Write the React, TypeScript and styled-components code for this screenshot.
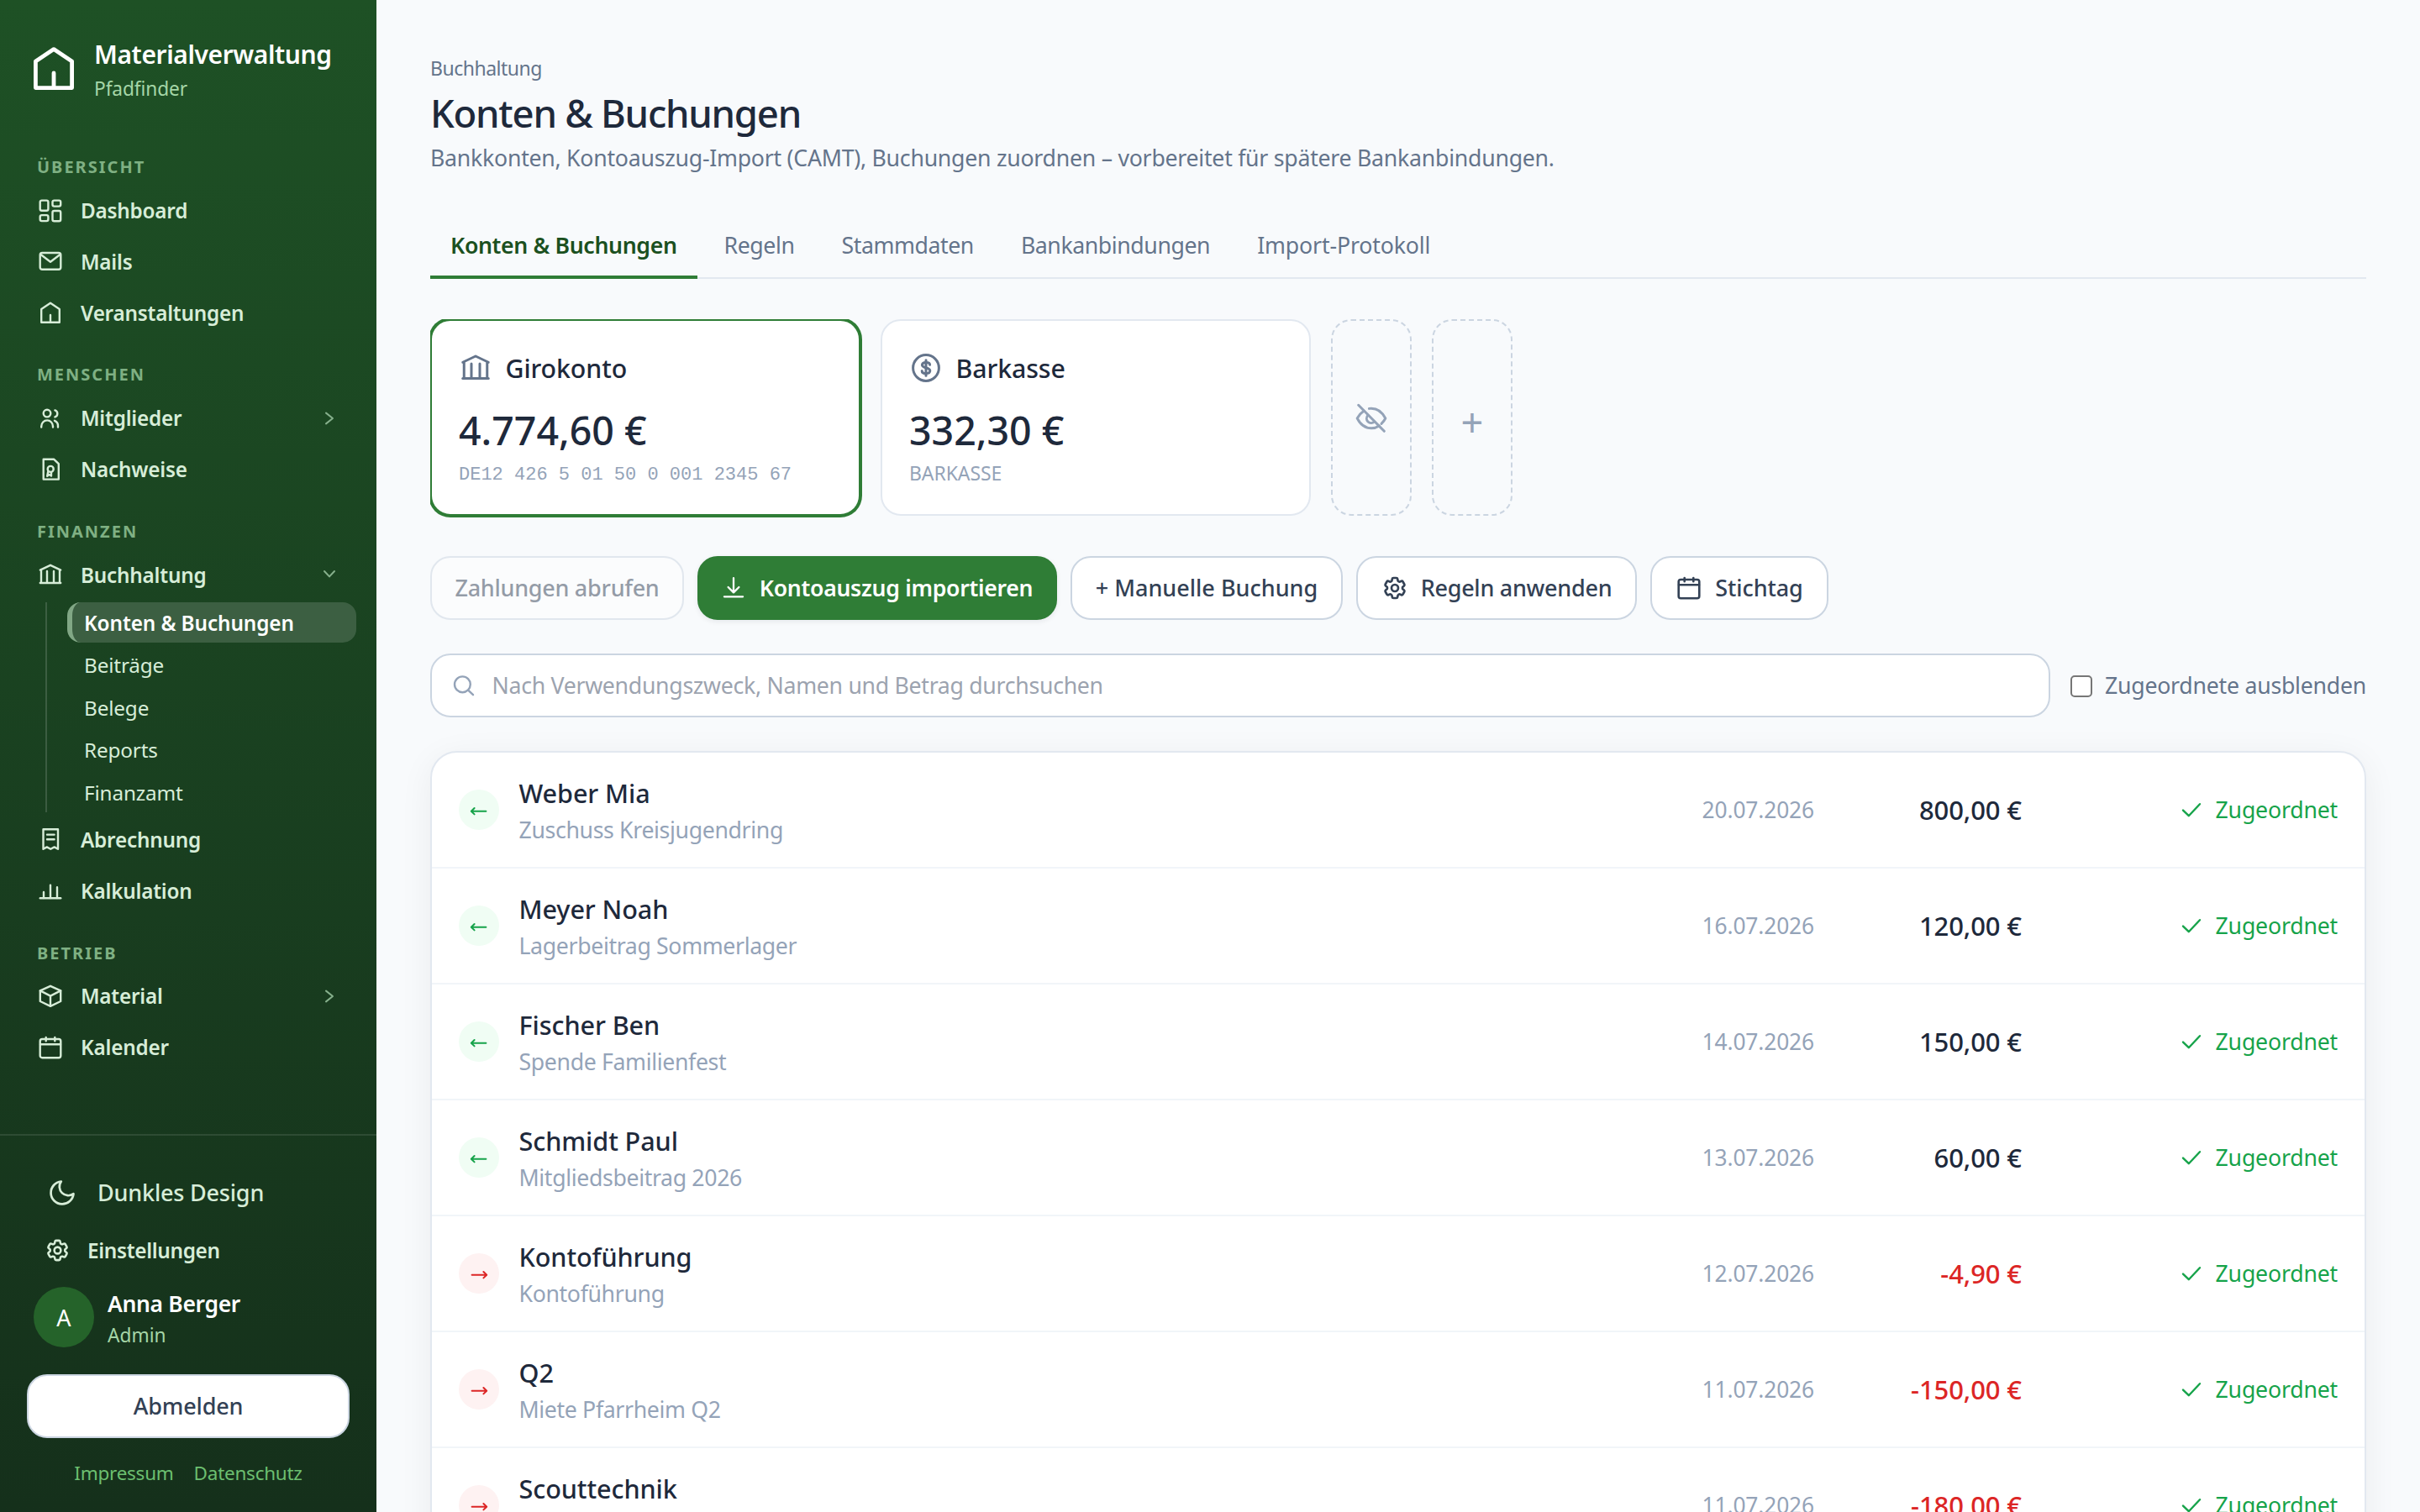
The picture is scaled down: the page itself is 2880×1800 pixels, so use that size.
import React from "react";
import styled, { createGlobalStyle, css } from "styled-components";
import { HiOutlineCog6Tooth } from "react-icons/hi2";

const GlobalStyle = createGlobalStyle`
  *, *::before, *::after {
    box-sizing: border-box;
  }

  body {
    margin: 0;
    height: 1800px;
    overflow: hidden;
    background: #f8fafc;
    color: #1e293b;
    font-family: "Noto Sans", "Open Sans", sans-serif;
  }

  button, input {
    font-family: inherit;
  }
`;

const Page = styled.div`
  display: flex;
  height: 1800px;
  overflow: hidden;
`;

/* ---------- icons ---------- */

const Svg = styled.svg<{ $size?: number; $stroke?: number }>`
  width: ${({ $size }) => $size || 32}px;
  height: ${({ $size }) => $size || 32}px;
  flex: none;
  fill: none;
  stroke: currentColor;
  stroke-width: ${({ $stroke }) => $stroke || 2.4};
  stroke-linecap: round;
  stroke-linejoin: round;
`;

const GearIcon = styled(HiOutlineCog6Tooth)<{ $size: number }>`
  width: ${({ $size }) => $size}px;
  height: ${({ $size }) => $size}px;
  flex: none;
  stroke-width: 2;
`;

type IconName =
  | "dashboard"
  | "mail"
  | "house"
  | "users"
  | "proof"
  | "bank"
  | "receipt"
  | "chart"
  | "box"
  | "calendar";

const icons: Record<IconName, React.ReactNode> = {
  dashboard: (
    <>
      <rect x="3.7" y="3.6" width="9.7" height="12.2" rx="2" />
      <rect x="18.5" y="3.6" width="9.7" height="7" rx="2" />
      <rect x="3.7" y="21.1" width="9.7" height="7" rx="2" />
      <rect x="18.5" y="16" width="9.7" height="12.2" rx="2" />
    </>
  ),
  mail: (
    <>
      <rect x="3.7" y="6" width="24.6" height="19.8" rx="2.5" />
      <path d="M4.5 8 16 16.8 27.5 8" />
    </>
  ),
  house: (
    <>
      <path d="M5.2 12 16 4.8 26.8 12V27.8H5.2Z" />
      <path d="M16 19V27.5" />
    </>
  ),
  users: (
    <>
      <circle cx="12" cy="10.1" r="4.3" />
      <path d="M5.2 26.5V25.6a6.9 7.2 0 0 1 13.8 0V26.5" />
      <path d="M21.4 6.4a4.2 4.2 0 0 1 0 8" />
      <path d="M21 18.8a6.6 6.6 0 0 1 4 6.4V26.5" />
    </>
  ),
  proof: (
    <>
      <path d="M7.7 3.8H20.3L25.8 9.2V27.6H7.7Z" />
      <circle cx="16.2" cy="15.4" r="3.5" />
      <path d="M13.4 17.6 12.2 23.8 14.6 22 17 23.6V19" />
    </>
  ),
  bank: (
    <>
      <path d="M3.8 10.6 16 4.8 28.2 10.6" />
      <path d="M5 11V25M12 12V25M20 12V25M27 11V25" />
      <path d="M3.8 26H28.2" />
    </>
  ),
  receipt: (
    <>
      <path d="M7.5 3.2H25V26.8L20.7 24.4 16.2 26.8 11.8 24.4 7.5 26.8Z" />
      <path d="M12 9.6H20.6M12 15.2H20.6" />
    </>
  ),
  chart: (
    <>
      <path d="M3.8 25.2H28.2" />
      <path d="M8 18V25M16 9.6V25M24 12.2V25" />
    </>
  ),
  box: (
    <>
      <path d="M16 3.8 28.2 9.4V22L16 27.8 3.8 22V9.4Z" />
      <path d="M3.8 9.4 16 15.6 28.2 9.4M16 15.6V27.6" />
    </>
  ),
  calendar: (
    <>
      <rect x="3.7" y="6" width="24.6" height="22.2" rx="2.5" />
      <path d="M4 12.2H28M10.7 4V8.2M21.3 4V8.2" />
    </>
  ),
};

const Icon = ({
  name,
  size,
  stroke,
}: {
  name: IconName;
  size?: number;
  stroke?: number;
}) => (
  <Svg viewBox="0 0 32 32" $size={size} $stroke={stroke}>
    {icons[name]}
  </Svg>
);

/* ---------- sidebar ---------- */

const Sidebar = styled.aside`
  width: 448px;
  height: 1800px;
  flex: none;
  display: flex;
  flex-direction: column;
  background: linear-gradient(180deg, #1e5125 0%, #15301b 100%);
  color: #d7edd8;
`;

const Brand = styled.div`
  display: flex;
  align-items: center;
  gap: 16px;
  height: 185.3px;
  padding: 0 24px 23px 32px;
  color: #fff;
`;

const BrandText = styled.div`
  padding-top: 6px;
`;

const BrandName = styled.div`
  font-size: 30px;
  line-height: 44px;
  font-weight: 600;
  letter-spacing: -0.4px;
`;

const BrandSub = styled.div`
  font-size: 22.7px;
  line-height: 38px;
  letter-spacing: -0.1px;
  color: #a5d6a7;
`;

const Nav = styled.nav`
  flex: 1;
  display: flex;
  flex-direction: column;
  gap: 29.8px;
`;

const NavSection = styled.div`
  display: flex;
  flex-direction: column;
`;

const NavLabel = styled.div`
  padding-left: 44px;
  margin-bottom: 7px;
  font-size: 20px;
  line-height: 28px;
  font-weight: 700;
  letter-spacing: 2px;
  color: #7fb083;
`;

const NavItem = styled.a`
  display: flex;
  align-items: center;
  height: 60.8px;
  padding: 0 44px;
  gap: 20px;
  font-size: 24.3px;
  font-weight: 600;
  letter-spacing: -0.22px;
`;

const Chevron = styled(Svg)`
  margin-left: auto;
  color: #86b08c;
`;

const SubNav = styled.div`
  display: flex;
  flex-direction: column;
  gap: 2.5px;
  margin: 2.5px 24px 2px 54px;
  padding-left: 24px;
  border-left: 2px solid rgba(255, 255, 255, 0.15);
`;

const SubItem = styled.a<{ $active?: boolean }>`
  display: flex;
  align-items: center;
  height: 48px;
  padding-left: 14px;
  border-left: 6px solid transparent;
  border-radius: 16px;
  font-size: 24.3px;
  letter-spacing: -0.15px;
  ${({ $active }) =>
    $active &&
    css`
      border-left-color: #81a785;
      background: rgba(255, 255, 255, 0.15);
      color: #fff;
      font-weight: 600;
      letter-spacing: -0.1px;
    `}
`;

const SidebarFooter = styled.div`
  height: 450px;
  padding: 32px 32px 0;
  border-top: 2px solid rgba(255, 255, 255, 0.1);
`;

const ThemeToggle = styled.div`
  display: flex;
  align-items: center;
  height: 71px;
  padding-left: 24px;
  gap: 24px;
  font-size: 27px;
  font-weight: 500;
  letter-spacing: -0.2px;
`;

const SettingsLink = styled.a`
  display: flex;
  align-items: center;
  height: 66px;
  padding-left: 21px;
  gap: 20px;
  font-size: 24.4px;
  font-weight: 600;
  letter-spacing: -0.35px;
`;

const UserRow = styled.div`
  display: flex;
  gap: 16px;
  height: 72px;
  margin-top: 11px;
  padding-left: 8px;
`;

const Avatar = styled.div`
  width: 72px;
  height: 72px;
  border-radius: 50%;
  display: flex;
  align-items: center;
  justify-content: center;
  background: #25632a;
  color: #fff;
  font-size: 27px;
`;

const UserName = styled.div`
  padding-top: 1px;
  font-size: 26.5px;
  line-height: 39px;
  font-weight: 600;
  letter-spacing: -0.35px;
  color: #fff;
`;

const UserRole = styled.div`
  font-size: 22.7px;
  line-height: 35px;
  color: #a5d6a7;
`;

const LogoutButton = styled.button`
  display: block;
  width: 100%;
  height: 76px;
  margin-top: 32px;
  padding: 0 0 1px;
  border: 2px solid #cbd5e1;
  border-radius: 24px;
  background: #fff;
  color: #334155;
  font-size: 27px;
  font-weight: 500;
  letter-spacing: -0.15px;
`;

const LegalLinks = styled.div`
  display: flex;
  justify-content: center;
  gap: 24px;
  margin-top: 25.5px;
  font-size: 22.5px;
  line-height: 32px;
  letter-spacing: -0.25px;
  color: #6cbf70;
`;

/* ---------- main ---------- */

const Main = styled.main`
  flex: 1;
  min-width: 0;
  padding: 65px 64px 0;
`;

const Breadcrumb = styled.div`
  font-size: 23px;
  line-height: 32px;
  letter-spacing: -0.5px;
  color: #64748b;
`;

const Title = styled.h1`
  margin: 9px 0 6px;
  font-size: 45.5px;
  line-height: 56px;
  font-weight: 500;
  letter-spacing: -1.25px;
`;

const Intro = styled.p`
  margin: 0;
  font-size: 26.7px;
  line-height: 40px;
  letter-spacing: -0.26px;
  color: #64748b;
`;

const Tabs = styled.div`
  display: flex;
  gap: 8px;
  height: 81px;
  margin-top: 43px;
  box-shadow: inset 0 -2px #e2e8f0;
`;

const Tab = styled.a<{ $active?: boolean }>`
  display: flex;
  align-items: center;
  padding: 3px 24px 0;
  border-bottom: 4px solid transparent;
  font-size: 26.7px;
  letter-spacing: -0.43px;
  color: #64748b;

  &:last-child {
    letter-spacing: -0.15px;
  }

  ${({ $active }) =>
    $active &&
    css`
      border-bottom-color: #2f7d36;
      color: #1b5020;
      font-weight: 600;
      letter-spacing: -0.38px;
    `}
`;

const Accounts = styled.div`
  display: flex;
  gap: 24px;
  height: 242px;
  margin-top: 48px;
  overflow: hidden;
`;

const AccountCard = styled.div<{ $selected?: boolean }>`
  width: 512px;
  height: 234px;
  padding: 34px 30px 0 32px;
  border: 2px solid #e2e8f0;
  border-radius: 24px;
  background: #fff;
  ${({ $selected }) =>
    $selected &&
    css`
      border-color: #2f7d36;
      box-shadow: 0 0 0 2px #2f7d36;
    `}
`;

const AccountHead = styled.div`
  display: flex;
  align-items: center;
  gap: 13.5px;
  height: 44px;
  margin-left: -2px;
  font-size: 30.3px;
  font-weight: 500;
  letter-spacing: -0.1px;
`;

const AccountIcon = styled.span`
  width: 44px;
  height: 44px;
  display: flex;
  align-items: center;
  justify-content: center;
  color: #64748b;
`;

const Balance = styled.div`
  margin: 22px 0 8px;
  font-size: 46.5px;
  line-height: 60px;
  font-weight: 500;
`;

const AccountMeta = styled.div<{ $mono?: boolean }>`
  font-size: 23px;
  line-height: 26px;
  letter-spacing: -0.1px;
  color: #94a3b8;
  ${({ $mono }) =>
    $mono &&
    css`
      font-family: "Liberation Mono", monospace;
      font-size: 22px;
      line-height: 32px;
      letter-spacing: 0;
    `}
`;

const GhostCard = styled.button<{ $text?: boolean }>`
  width: 96px;
  height: 234px;
  display: flex;
  align-items: center;
  justify-content: center;
  padding: ${({ $text }) => ($text ? "10px 0 0" : "2px 0 0")};
  border: 2px dashed #cbd5e1;
  border-radius: 24px;
  background: transparent;
  color: #94a3b8;
  font-size: 47px;
  line-height: 60px;
`;

const Toolbar = styled.div`
  display: flex;
  gap: 16px;
  margin-top: 40px;
`;

const ToolButton = styled.button<{
  $width: number;
  $primary?: boolean;
  $tracking?: number;
}>`
  display: flex;
  align-items: center;
  justify-content: center;
  gap: 15px;
  width: ${({ $width }) => $width}px;
  height: 76px;
  padding: 0 0 1px;
  border: 2px solid #cbd5e1;
  border-radius: 24px;
  background: #fff;
  color: #334155;
  font-size: 27px;
  font-weight: 500;
  letter-spacing: ${({ $tracking }) => $tracking ?? -0.28}px;
  white-space: nowrap;

  &:disabled {
    opacity: 0.5;
  }

  ${({ $primary }) =>
    $primary &&
    css`
      gap: 17px;
      border-color: #2f7d36;
      background: #2f7d36;
      color: #fff;
      font-size: 26.6px;
      font-weight: 600;
      box-shadow: 0 2px 6px rgba(15, 23, 42, 0.08);
    `}
`;

const FilterRow = styled.div`
  display: flex;
  align-items: center;
  gap: 24px;
  margin-top: 40px;
`;

const SearchBox = styled.label`
  flex: 1;
  display: flex;
  align-items: center;
  gap: 19.5px;
  height: 76px;
  padding: 0 24px;
  border: 2px solid #cbd5e1;
  border-radius: 24px;
  background: #fff;
  color: #94a3b8;
`;

const SearchInput = styled.input`
  flex: 1;
  padding: 0 0 2px;
  border: 0;
  outline: 0;
  background: transparent;
  font-size: 26.7px;
  letter-spacing: -0.3px;

  &::placeholder {
    color: #9ca3af;
    opacity: 1;
  }
`;

const HideLabel = styled.label`
  display: flex;
  align-items: center;
  gap: 15px;
  font-size: 26.7px;
  line-height: 36px;
  letter-spacing: -0.25px;
  color: #64748b;
`;

const Checkbox = styled.input`
  appearance: none;
  width: 26px;
  height: 26px;
  margin: 2px 0 0;
  border: 2px solid #767676;
  border-radius: 5px;
  background: #fff;
`;

const Table = styled.div`
  margin-top: 40px;
  border: 2px solid #e2e8f0;
  border-radius: 32px;
  background: #fff;
  box-shadow: 0 8px 40px rgba(15, 23, 42, 0.06);
`;

const Row = styled.div`
  display: flex;
  align-items: center;
  height: 138px;
  padding: 0 32px;
  border-bottom: 2px solid #f1f5f9;
`;

const Direction = styled.span<{ $out: boolean }>`
  width: 48px;
  height: 48px;
  display: flex;
  align-items: center;
  justify-content: center;
  border-radius: 50%;
  background: ${({ $out }) => ($out ? "#fef2f2" : "#f0fdf4")};
  color: ${({ $out }) => ($out ? "#dc2626" : "#16a34a")};
`;

const Booking = styled.div`
  flex: 1;
  display: flex;
  flex-direction: column;
  gap: 4px;
  padding-left: 23.5px;
`;

const Party = styled.div`
  font-size: 30.6px;
  line-height: 44px;
  font-weight: 500;
  letter-spacing: -0.1px;
`;

const Purpose = styled.div`
  font-size: 26.7px;
  line-height: 36px;
  letter-spacing: -0.36px;
  color: #94a3b8;
`;

const BookingDate = styled.div`
  font-size: 26.4px;
  letter-spacing: -0.15px;
  color: #94a3b8;
`;

const Amount = styled.div<{ $out: boolean }>`
  width: 247px;
  text-align: right;
  font-size: 31px;
  font-weight: 500;
  letter-spacing: -0.1px;
  color: ${({ $out }) => ($out ? "#dc2626" : "#1e293b")};
`;

const Status = styled.div`
  width: 376px;
  display: flex;
  align-items: center;
  justify-content: flex-end;
  gap: 14.7px;
  padding-bottom: 1px;
  font-size: 26.7px;
  letter-spacing: -0.2px;
  color: #16a34a;
`;

const bookings = [
  { party: "Weber Mia", purpose: "Zuschuss Kreisjugendring", date: "20.07.2026", amount: "800,00 €" },
  { party: "Meyer Noah", purpose: "Lagerbeitrag Sommerlager", date: "16.07.2026", amount: "120,00 €" },
  { party: "Fischer Ben", purpose: "Spende Familienfest", date: "14.07.2026", amount: "150,00 €" },
  { party: "Schmidt Paul", purpose: "Mitgliedsbeitrag 2026", date: "13.07.2026", amount: "60,00 €" },
  { party: "Kontoführung", purpose: "Kontoführung", date: "12.07.2026", amount: "-4,90 €" },
  { party: "Q2", purpose: "Miete Pfarrheim Q2", date: "11.07.2026", amount: "-150,00 €" },
  { party: "Scouttechnik", purpose: "Material", date: "11.07.2026", amount: "-180,00 €" },
];

const subPages = ["Konten & Buchungen", "Beiträge", "Belege", "Reports", "Finanzamt"];

const tabs = ["Konten & Buchungen", "Regeln", "Stammdaten", "Bankanbindungen", "Import-Protokoll"];

const ChevronRight = () => (
  <Chevron viewBox="0 0 24 24" $size={24} $stroke={2}>
    <path d="M8 5.6 16 12 8 18.4" />
  </Chevron>
);

const ChevronDown = () => (
  <Chevron viewBox="0 0 24 24" $size={24} $stroke={2}>
    <path d="M6 8 12 14.4 18 8" />
  </Chevron>
);

const AppSidebar = () => (
  <Sidebar>
    <Brand>
      <Icon name="house" size={64} />
      <BrandText>
        <BrandName>Materialverwaltung</BrandName>
        <BrandSub>Pfadfinder</BrandSub>
      </BrandText>
    </Brand>
    <Nav>
      <NavSection>
        <NavLabel>ÜBERSICHT</NavLabel>
        <NavItem><Icon name="dashboard" />Dashboard</NavItem>
        <NavItem><Icon name="mail" />Mails</NavItem>
        <NavItem><Icon name="house" />Veranstaltungen</NavItem>
      </NavSection>
      <NavSection>
        <NavLabel>MENSCHEN</NavLabel>
        <NavItem><Icon name="users" />Mitglieder<ChevronRight /></NavItem>
        <NavItem><Icon name="proof" />Nachweise</NavItem>
      </NavSection>
      <NavSection>
        <NavLabel>FINANZEN</NavLabel>
        <NavItem><Icon name="bank" />Buchhaltung<ChevronDown /></NavItem>
        <SubNav>
          {subPages.map((page, i) => (
            <SubItem key={page} $active={i === 0}>{page}</SubItem>
          ))}
        </SubNav>
        <NavItem><Icon name="receipt" />Abrechnung</NavItem>
        <NavItem><Icon name="chart" />Kalkulation</NavItem>
      </NavSection>
      <NavSection>
        <NavLabel>BETRIEB</NavLabel>
        <NavItem><Icon name="box" />Material<ChevronRight /></NavItem>
        <NavItem><Icon name="calendar" />Kalender</NavItem>
      </NavSection>
    </Nav>
    <SidebarFooter>
      <ThemeToggle>
        <Svg viewBox="0 0 24 24" $size={36} $stroke={1.8}>
          <path d="M21 12.79A9 9 0 1 1 11.21 3 7 7 0 0 0 21 12.79Z" />
        </Svg>
        Dunkles Design
      </ThemeToggle>
      <SettingsLink>
        <GearIcon $size={31} />
        Einstellungen
      </SettingsLink>
      <UserRow>
        <Avatar>A</Avatar>
        <div>
          <UserName>Anna Berger</UserName>
          <UserRole>Admin</UserRole>
        </div>
      </UserRow>
      <LogoutButton>Abmelden</LogoutButton>
      <LegalLinks>
        <span>Impressum</span>
        <span>Datenschutz</span>
      </LegalLinks>
    </SidebarFooter>
  </Sidebar>
);

const App = () => {
  return (
    <Page>
      <GlobalStyle />
      <AppSidebar />
      <Main>
        <Breadcrumb>Buchhaltung</Breadcrumb>
        <Title>Konten & Buchungen</Title>
        <Intro>
          Bankkonten, Kontoauszug-Import (CAMT), Buchungen zuordnen – vorbereitet für spätere
          Bankanbindungen.
        </Intro>
        <Tabs>
          {tabs.map((tab, i) => (
            <Tab key={tab} $active={i === 0}>{tab}</Tab>
          ))}
        </Tabs>
        <Accounts>
          <AccountCard $selected>
            <AccountHead>
              <AccountIcon><Icon name="bank" size={40} /></AccountIcon>
              Girokonto
            </AccountHead>
            <Balance>4.774,60 €</Balance>
            <AccountMeta $mono>DE12 426 5 01 50 0 001 2345 67</AccountMeta>
          </AccountCard>
          <AccountCard>
            <AccountHead>
              <AccountIcon>
                <Svg viewBox="0 0 44 44" $size={44} $stroke={3}>
                  <circle cx="22" cy="22" r="15.4" />
                  <path d="M22 12.8V31.2" />
                  <path d="M26.6 18.2C26.6 16.4 24.6 15.4 22 15.4S17.4 16.6 17.4 18.6C17.4 22.8 26.8 21 26.8 25.2 26.8 27.4 24.8 28.6 22 28.6S17.2 27.4 17.2 25.4" />
                </Svg>
              </AccountIcon>
              Barkasse
            </AccountHead>
            <Balance>332,30 €</Balance>
            <AccountMeta>BARKASSE</AccountMeta>
          </AccountCard>
          <GhostCard>
            <Svg viewBox="0 0 44 44" $size={44} $stroke={3}>
              <path d="M6.7 6.3 37.3 37.3" />
              <path d="M13 13.2C9.6 15.4 7 18.6 5.2 22 8.5 28.4 14.5 33.8 22 33.8 25.5 33.8 28.7 32.6 31.3 30.9" />
              <path d="M19.4 10.4C20.3 10.2 21.1 10.2 22 10.2 29.5 10.2 35.5 15.6 38.8 22 37.5 24.6 35.8 26.7 34 28.4" />
              <path d="M18 18.4A5.3 5.3 0 0 0 25.5 26" />
            </Svg>
          </GhostCard>
          <GhostCard $text>+</GhostCard>
        </Accounts>
        <Toolbar>
          <ToolButton $width={302} disabled>Zahlungen abrufen</ToolButton>
          <ToolButton $width={428} $primary>
            <Svg viewBox="0 0 28 28" $size={28} $stroke={2.3}>
              <path d="M14 2.2V19.4M7.6 13 14 19.4 20.4 13M2.9 24.3H25.1" />
            </Svg>
            Kontoauszug importieren
          </ToolButton>
          <ToolButton $width={324} $tracking={0}>+ Manuelle Buchung</ToolButton>
          <ToolButton $width={334}>
            <GearIcon $size={32} />
            Regeln anwenden
          </ToolButton>
          <ToolButton $width={212} $tracking={-0.1}>
            <Icon name="calendar" stroke={2.6} />
            Stichtag
          </ToolButton>
        </Toolbar>
        <FilterRow>
          <SearchBox>
            <Svg viewBox="0 0 28 28" $size={28} $stroke={2.4}>
              <circle cx="12.4" cy="12.8" r="9.4" />
              <path d="M19.4 19.8 25 25.2" />
            </Svg>
            <SearchInput placeholder="Nach Verwendungszweck, Namen und Betrag durchsuchen" />
          </SearchBox>
          <HideLabel>
            <Checkbox type="checkbox" />
            Zugeordnete ausblenden
          </HideLabel>
        </FilterRow>
        <Table>
          {bookings.map((booking) => {
            const out = booking.amount.startsWith("-");
            return (
              <Row key={booking.party}>
                <Direction $out={out}>
                  <Svg viewBox="0 0 24 24" $size={24} $stroke={2}>
                    {out ? (
                      <path d="M3.6 13.7H21M17.4 10 21.2 13.7 17.4 17.4" />
                    ) : (
                      <path d="M20.4 13.7H3M6.6 10 2.8 13.7 6.6 17.4" />
                    )}
                  </Svg>
                </Direction>
                <Booking>
                  <Party>{booking.party}</Party>
                  <Purpose>{booking.purpose}</Purpose>
                </Booking>
                <BookingDate>{booking.date}</BookingDate>
                <Amount $out={out}>{booking.amount}</Amount>
                <Status>
                  <Svg viewBox="0 0 28 28" $size={28} $stroke={2.4}>
                    <path d="M4 14.6 10.8 21.2 24 7.2" />
                  </Svg>
                  Zugeordnet
                </Status>
              </Row>
            );
          })}
        </Table>
      </Main>
    </Page>
  );
};

export default App;
